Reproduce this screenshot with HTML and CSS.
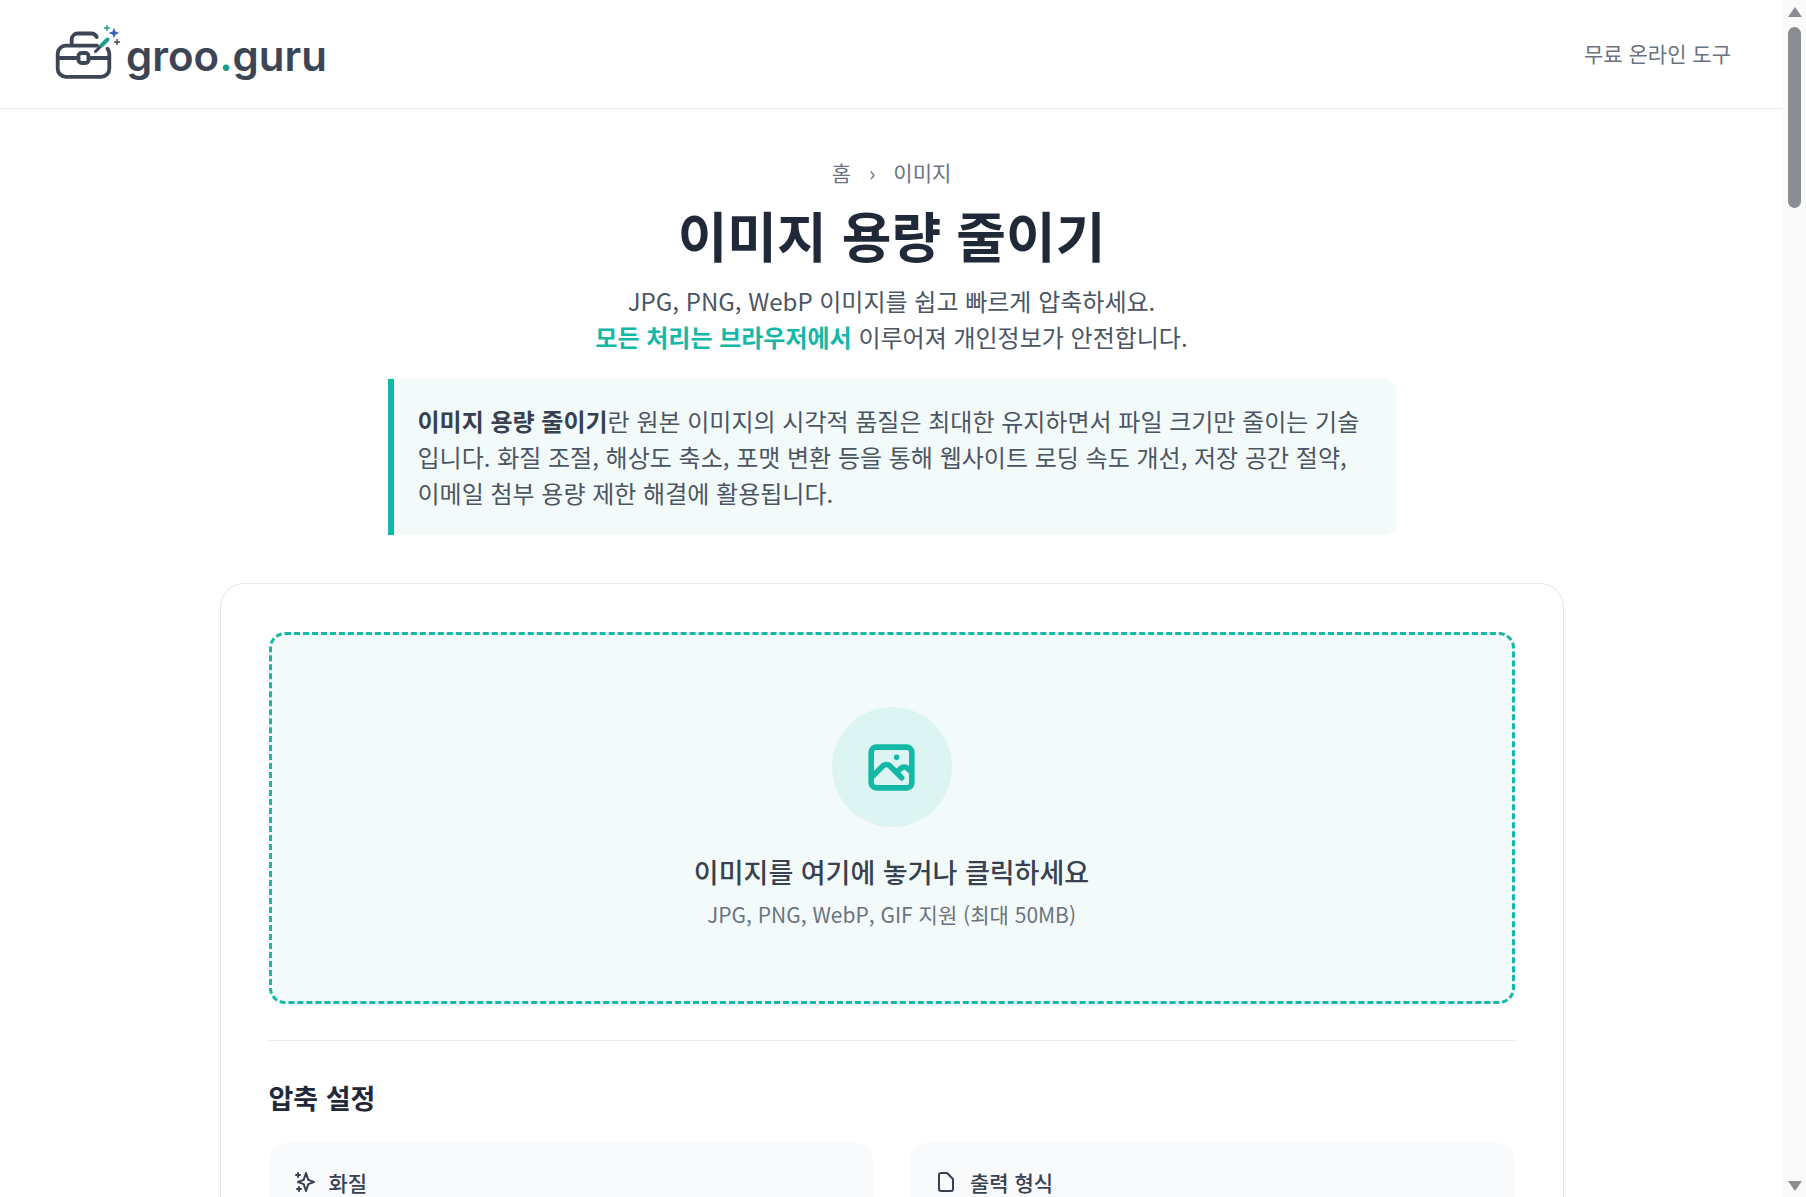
FILE: index.html
```html
<!DOCTYPE html>
<html lang="ko">
<head>
    <meta charset="UTF-8">
    <meta name="viewport" content="width=device-width, initial-scale=1.0">
    <title>이미지 용량 줄이기 - groo.guru</title>
    <link rel="stylesheet" href="styles.css">
</head>
<body>
    <div class="page">
        <header class="site-header">
            <a class="logo" href="#">
                <svg class="logo-mark" viewBox="0 0 74 62" fill="none" stroke-linecap="round" stroke-linejoin="round">
                    <path d="M20.700 22v-4.500a6 6 0 0 1 6-6h13.600a6 6 0 0 1 5.400 3.500" stroke="#3b4555" stroke-width="3.800"/>
                    <path d="M46 23.700H14.700a8 8 0 0 0-8 8v15.100a8 8 0 0 0 8 8h35.600a8 8 0 0 0 8-8V31.700a8 8 0 0 0-1.800-5" stroke="#3b4555" stroke-width="3.800"/>
                    <path d="M6.700 36h20.600M37.500 36h20.800" stroke="#3b4555" stroke-width="3.800"/>
                    <rect x="27.500" y="31" width="10" height="10" rx="3" stroke="#3b4555" stroke-width="3.800"/>
                    <path d="M44.500 29.500l6-6" stroke="#3b4555" stroke-width="3"/>
                    <path d="M50.500 23.500l6-6" stroke="#1d9e8c" stroke-width="4"/>
                    <path d="M63 5.500l1.500 4 4 1.500-4 1.500-1.500 4-1.500-4-4-1.500 4-1.500z" fill="#3d63b3"/>
                    <path d="M53.500 6h5M56 3.500v5" stroke="#1d9e8c" stroke-width="1.400"/>
                    <path d="M63.500 20h5M66 17.500v5" stroke="#3b4555" stroke-width="1.400"/>
                </svg>
                <span class="logo-text">groo<span class="logo-dot">.</span>guru</span>
            </a>
            <nav class="site-nav">무료 온라인 도구</nav>
        </header>

        <main class="content">
            <div class="breadcrumb">
                <a href="#">홈</a>
                <span class="sep">›</span>
                <a href="#">이미지</a>
            </div>
            <h1>이미지 용량 줄이기</h1>
            <p class="lead">JPG, PNG, WebP 이미지를 쉽고 빠르게 압축하세요.<br><strong>모든 처리는 브라우저에서</strong> 이루어져 개인정보가 안전합니다.</p>
            <p class="intro"><strong>이미지 용량 줄이기</strong>란 원본 이미지의 시각적 품질은 최대한 유지하면서 파일 크기만 줄이는 기술입니다. 화질 조절, 해상도 축소, 포맷 변환 등을 통해 웹사이트 로딩 속도 개선, 저장 공간 절약, 이메일 첨부 용량 제한 해결에 활용됩니다.</p>

            <section class="card">
                <div class="dropzone">
                    <div class="drop-icon">
                        <svg viewBox="0 0 24 24" fill="none" stroke="currentColor" stroke-width="2.200" stroke-linecap="round" stroke-linejoin="round">
                            <path d="M4 16l4.586-4.586a2 2 0 012.828 0L16 16m-2-2l1.586-1.586a2 2 0 012.828 0L20 14m-6-6h.01M6 20h12a2 2 0 002-2V6a2 2 0 00-2-2H6a2 2 0 00-2 2v12a2 2 0 002 2z"/>
                        </svg>
                    </div>
                    <p class="drop-title">이미지를 여기에 놓거나 클릭하세요</p>
                    <p class="drop-hint">JPG, PNG, WebP, GIF 지원 (최대 50MB)</p>
                </div>

                <h2>압축 설정</h2>
                <div class="settings">
                    <div class="setting">
                        <div class="setting-label">
                            <svg viewBox="0 0 24 24" fill="none" stroke="currentColor" stroke-width="2" stroke-linecap="round" stroke-linejoin="round">
                                <path d="M5 3v4M3 5h4M6 17v4m-2-2h4m5-16l2.286 6.857L21 12l-5.714 2.143L13 21l-2.286-6.857L5 12l5.714-2.143L13 3z"/>
                            </svg>
                            화질
                        </div>
                    </div>
                    <div class="setting">
                        <div class="setting-label">
                            <svg viewBox="0 0 24 24" fill="none" stroke="currentColor" stroke-width="2" stroke-linecap="round" stroke-linejoin="round">
                                <path d="M7 21h10a2 2 0 002-2V9.414a1 1 0 00-.293-.707l-5.414-5.414A1 1 0 0012.586 3H7a2 2 0 00-2 2v14a2 2 0 002 2z"/>
                            </svg>
                            출력 형식
                        </div>
                    </div>
                </div>
            </section>
        </main>
    </div>

    <div class="scrollbar">
        <span class="arrow-up"></span>
        <span class="thumb"></span>
        <span class="arrow-down"></span>
    </div>
</body>
</html>
```

FILE: styles.css
```css
* {
    box-sizing: border-box;
}
html, body {
    height: 100%;
}
body {
    margin: 0;
    display: flex;
    overflow: hidden;
    background-color: #fff;
    color: #4b5563;
    font-family: "Noto Sans CJK KR", "Noto Sans", sans-serif;
}
a {
    color: inherit;
    text-decoration: none;
}
.page {
    flex: 1;
    min-width: 0;
    height: 100%;
    overflow: hidden;
}

/* header */
.site-header {
    height: 109px;
    padding: 0 52px 2px 51px;
    display: flex;
    align-items: center;
    justify-content: space-between;
    border-bottom: 1px solid #e5e7eb;
}
.logo {
    display: flex;
    align-items: center;
    gap: 1px;
}
.logo-mark {
    width: 74px;
    height: 62px;
}
.logo-text {
    padding-top: 6px;
    font-family: Inter, sans-serif;
    font-size: 42px;
    font-weight: 600;
    line-height: 62px;
    color: #3b4555;
}
.logo-dot {
    color: #1d9e8c;
}
.site-nav {
    font-size: 21px;
    color: #6b7280;
}

/* page top */
.content {
    display: flex;
    flex-direction: column;
    align-items: center;
    padding-top: 48px;
}
.breadcrumb {
    display: flex;
    gap: 18px;
    font-size: 21px;
    line-height: 30px;
    color: #6b7280;
}
h1 {
    margin: 12px 0 0;
    font-size: 54px;
    line-height: 72px;
    font-weight: 700;
    color: #1f2937;
}
.lead {
    margin: 12px 0 0;
    font-size: 24px;
    line-height: 36px;
    text-align: center;
    color: #4b5563;
}
.lead strong {
    color: #14b8a6;
}
.intro {
    width: 1008px;
    margin: 24px 0 0;
    padding: 24px;
    font-size: 24px;
    line-height: 36px;
    color: #4b5563;
    background-color: #f3fbfa;
    border-left: 6px solid #14b8a6;
    border-radius: 0 12px 12px 0;
}
.intro strong {
    color: #374151;
}

/* card */
.card {
    width: 1344px;
    margin-top: 48px;
    padding: 48px;
    background: #fff;
    border: 1px solid #e5e7eb;
    border-radius: 24px;
}
.dropzone {
    height: 372px;
    padding-top: 72px;
    display: flex;
    flex-direction: column;
    align-items: center;
    background-color: #f3fbfa;
    border: 3px dashed #14b8a6;
    border-radius: 16px;
}
.drop-icon {
    width: 120px;
    height: 120px;
    display: flex;
    align-items: center;
    justify-content: center;
    border-radius: 50%;
    color: #14b8a6;
    background-color: #ddf5f2;
}
.drop-icon svg {
    width: 61px;
    height: 61px;
}
.drop-title {
    margin: 25px 0 0;
    font-size: 27px;
    line-height: 40px;
    font-weight: 500;
    color: #374151;
}
.drop-hint {
    margin: 6px 0 0;
    font-size: 21px;
    line-height: 32px;
    color: #6b7280;
}
h2 {
    margin: 36px 0 0;
    padding-top: 37px;
    font-size: 27px;
    line-height: 40px;
    font-weight: 700;
    color: #1f2937;
    border-top: 1px solid #e5e7eb;
}
.settings {
    margin-top: 25px;
    display: grid;
    grid-template-columns: 1fr 1fr;
    gap: 37px;
}
.setting {
    height: 200px;
    padding: 23px 24px;
    background-color: #f9fafb;
    border-radius: 16px;
}
.setting-label {
    display: flex;
    align-items: center;
    gap: 12px;
    font-size: 21px;
    line-height: 32px;
    font-weight: 500;
    color: #374151;
}
.setting-label svg {
    width: 24px;
    height: 24px;
}

/* window scrollbar */
.scrollbar {
    flex: none;
    width: 23px;
    height: 100%;
    padding: 7px 4px 6px;
    display: flex;
    flex-direction: column;
    align-items: center;
    background-color: #fafafa;
}
.thumb {
    width: 13px;
    height: 181px;
    margin-top: 10px;
    border-radius: 7px;
    background-color: #8a8d91;
}
.arrow-up, .arrow-down {
    width: 0;
    height: 0;
    border-left: 7.5px solid transparent;
    border-right: 7.5px solid transparent;
}
.arrow-up {
    border-bottom: 10px solid #8a8d91;
}
.arrow-down {
    margin-top: auto;
    border-top: 10px solid #8a8d91;
}
```
